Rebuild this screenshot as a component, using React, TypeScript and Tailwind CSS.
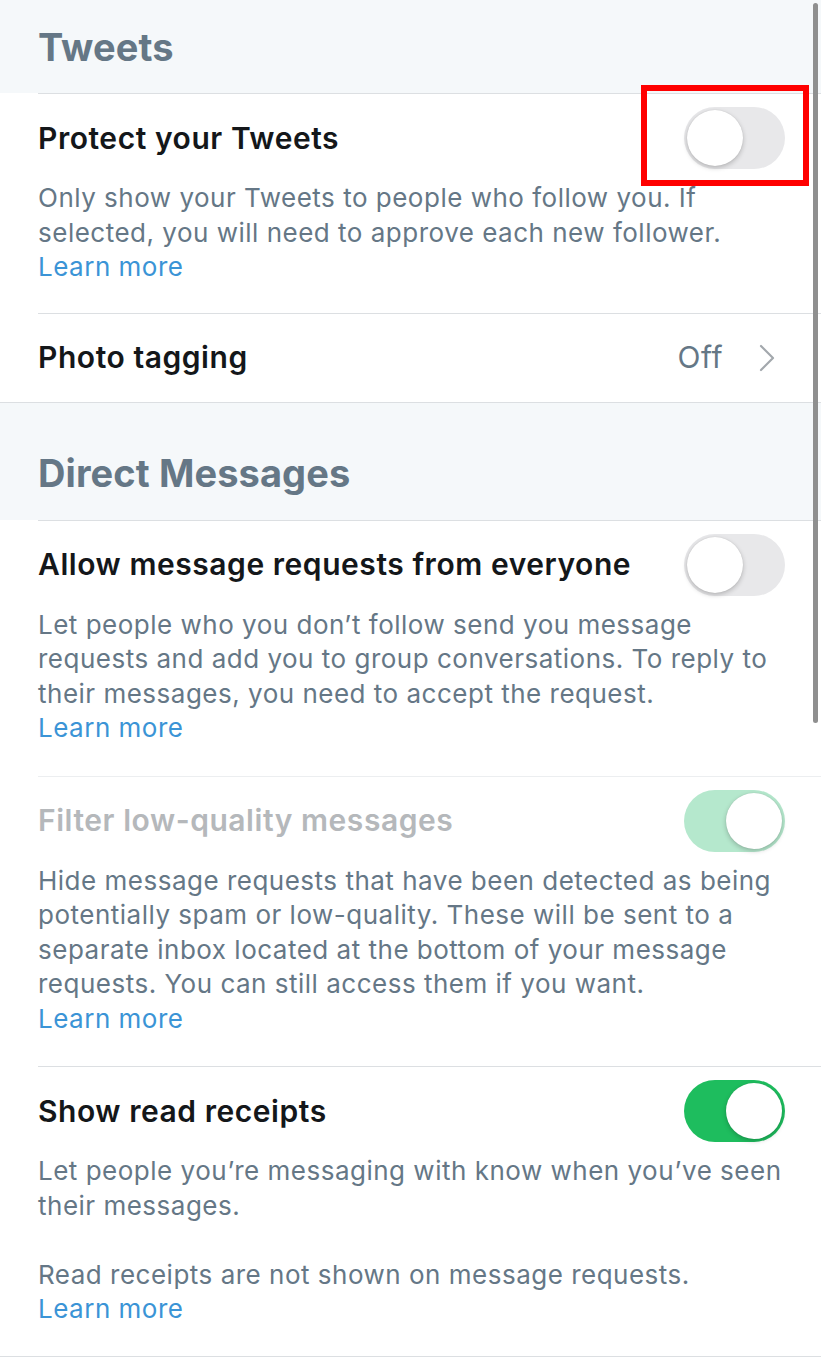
import React from "react";

const font = { fontFamily: "Inter, 'Noto Sans', sans-serif" };

function Toggle({ on, disabled }: { on: boolean; disabled?: boolean }) {
  const track = on ? (disabled ? "bg-[#b5e8cd]" : "bg-[#1ebd5e]") : "bg-[#e8e8ea]";
  return (
    <div className={`relative w-[101px] h-[62px] rounded-full shrink-0 ${track}`}>
      <div
        className={`absolute top-[3px] w-[56px] h-[56px] rounded-full bg-white shadow-[0_2px_5px_rgba(0,0,0,0.22),0_0_1px_rgba(0,0,0,0.15)] ${
          on ? "right-[3px]" : "left-[3px]"
        }`}
      />
    </div>
  );
}

function SectionHeader({ title, h }: { title: string; h: string }) {
  return (
    <div className={`bg-[#f5f8fa] ${h} flex items-end pl-[38px]`}>
      <div className="text-[38px] leading-[46px] font-bold text-[#657786] tracking-[0.1px]">{title}</div>
    </div>
  );
}

function Learn() {
  return <div className="text-[#3b94d6]">Learn more</div>;
}

function ToggleRow({
  title,
  on,
  disabled,
  children,
  pb,
}: {
  title: string;
  on: boolean;
  disabled?: boolean;
  children: React.ReactNode;
  pb: string;
}) {
  return (
    <div className={`pt-[13px] ${pb}`}>
      <div className="flex items-center justify-between pr-[36px]">
        <div
          className={`text-[30px] font-semibold tracking-[0.55px] ${
            disabled ? "text-[#b5b8bb]" : "text-[#14171a]"
          }`}
        >
          {title}
        </div>
        <Toggle on={on} disabled={disabled} />
      </div>
      <div className="mt-[12px] text-[26px] leading-[34.5px] tracking-[0.5px] text-[#657786] pr-[20px]">{children}</div>
    </div>
  );
}

export default function App() {
  return (
    <div className="relative w-[821px] h-[1357px] bg-white overflow-hidden" style={font}>
      <SectionHeader title="Tweets" h="h-[93px] pb-[23px]" />
      <div className="pl-[38px]">
        <div className="border-t border-[#dcdfe2]">
          <ToggleRow title="Protect your Tweets" on={false} pb="pb-[28px]">
            <div>Only show your Tweets to people who follow you. If selected, you will need to approve each new follower.</div>
            <Learn />
          </ToggleRow>
        </div>
        <div className="border-t border-[#dcdfe2] h-[89px] flex items-center justify-between pr-[46px]">
          <div className="text-[30px] font-semibold tracking-[0.55px] text-[#14171a]">Photo tagging</div>
          <div className="flex items-center gap-[36px]">
            <div className="text-[30px] tracking-[0.5px] text-[#657786]">Off</div>
            <svg width="16" height="28" viewBox="0 0 16 28" fill="none">
              <polyline points="2,2 14,14 2,26" stroke="#a3a8ad" strokeWidth="2.2" strokeLinecap="round" strokeLinejoin="round" />
            </svg>
          </div>
        </div>
      </div>
      <div className="border-t border-[#dcdfe2]">
        <SectionHeader title="Direct Messages" h="h-[117px] pb-[24px]" />
      </div>
      <div className="pl-[38px]">
        <div className="border-t border-[#dcdfe2]">
          <ToggleRow title="Allow message requests from everyone" on={false} pb="pb-[30px]">
            <div>Let people who you don’t follow send you message requests and add you to group conversations. To reply to their messages, you need to accept the request.</div>
            <Learn />
          </ToggleRow>
        </div>
        <div className="border-t border-[#eceef0]">
          <ToggleRow title="Filter low-quality messages" on={true} disabled pb="pb-[30px]">
            <div>Hide message requests that have been detected as being potentially spam or low-quality. These will be sent to a separate inbox located at the bottom of your message requests. You can still access them if you want.</div>
            <Learn />
          </ToggleRow>
        </div>
        <div className="border-t border-[#dcdfe2]">
          <ToggleRow title="Show read receipts" on={true} pb="pb-[29px]">
            <div>Let people you’re messaging with know when you’ve seen their messages.</div>
            <div className="h-[34.5px]" />
            <div>Read receipts are not shown on message requests.</div>
            <Learn />
          </ToggleRow>
        </div>
      </div>
      <div className="border-t border-[#dcdfe2]" />

      {/* scrollbar */}
      <div className="absolute right-[3px] top-[3px] w-[5px] h-[720px] rounded-full bg-[#8f8f8f]" />
      {/* red annotation box */}
      <div className="absolute left-[641px] top-[85px] w-[168px] h-[101px] border-[6px] border-[#ff0000]" />
    </div>
  );
}
